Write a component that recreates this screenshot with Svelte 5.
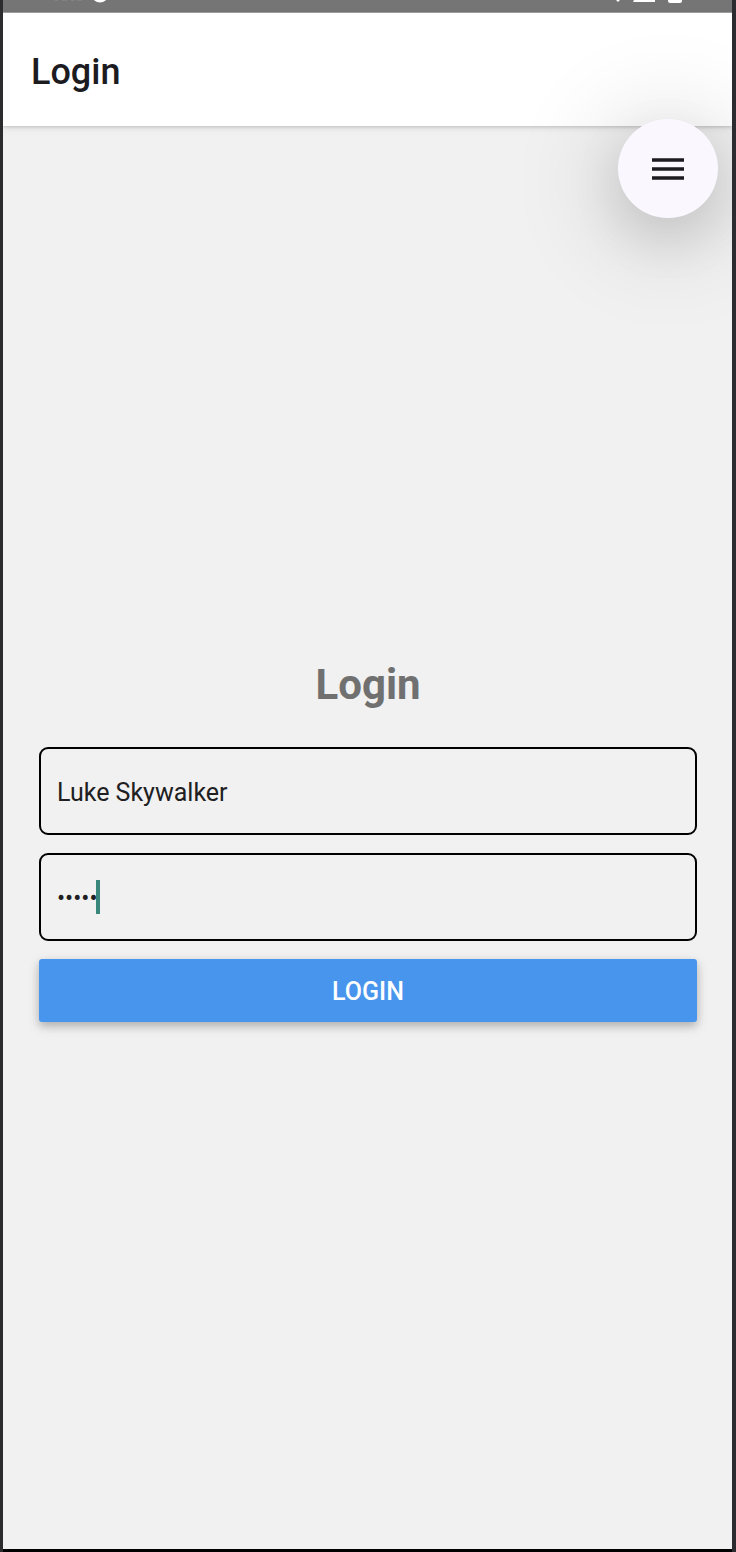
<script>
  let username = $state('Luke Skywalker');
  let password = $state('vader');
</script>

<div class="device">
  <div class="status" aria-hidden="true">
    <svg width="120" height="12" viewBox="0 0 120 12">
      <path d="M49 0h3M56 0h5M65 0h3M71 0h5" stroke="#909090" stroke-width="1" />
      <path d="M89 -1Q94 3 99 -1" fill="none" stroke="#fff" stroke-width="3" />
    </svg>
    <svg width="88" height="12" viewBox="0 0 88 12">
      <path d="M0 0h4L2 2Z" fill="#fff" />
      <path d="M18 0h21v2H17Z" fill="#fff" />
      <path d="M52 0h14v1q0 2-2 2H54q-2 0-2-2Z" fill="#fff" />
    </svg>
  </div>

  <header>
    <h1>Login</h1>
    <button class="menu" type="button" aria-label="Menu">
      <svg width="32" height="23" viewBox="0 0 32 23" aria-hidden="true">
        <path d="M0 3h32M0 12h32M0 21h32" stroke="#1c1b1f" stroke-width="3.600" />
      </svg>
    </button>
  </header>

  <main>
    <form onsubmit={(event) => event.preventDefault()}>
      <h2>Login</h2>
      <div class="field">
        <input type="text" aria-label="Username" bind:value={username} />
      </div>
      <div class="field">
        <input type="password" aria-label="Password" bind:value={password} />
        <span class="caret"></span>
      </div>
      <button class="submit" type="submit">LOGIN</button>
    </form>
  </main>
</div>

<style>
  :global(body) {
    margin: 0;
    background: #2b2b30;
  }

  .device {
    box-sizing: border-box;
    display: flex;
    flex-direction: column;
    min-height: 100vh;
    margin: 0 4px 0 3px;
    border-bottom: 3px solid #000;
    background: #f1f1f1;
    font-family: Roboto, sans-serif;
    overflow: hidden;
  }

  .status {
    display: flex;
    justify-content: space-between;
    height: 12px;
    padding: 0 28px 0 3px;
    border-bottom: 1px solid #a5a5a5;
    background: #757575;
  }

  .status svg {
    display: block;
  }

  header {
    position: relative;
    box-sizing: border-box;
    display: flex;
    align-items: center;
    height: 113px;
    padding: 4px 28px 0;
    background: #fff;
    box-shadow: 0 1px 3px rgb(0 0 0 / 16%), 0 2px 8px rgb(0 0 0 / 8%);
  }

  h1 {
    margin: 0;
    color: #1c1b1f;
    font-size: 36px;
    font-weight: 500;
    line-height: 48px;
  }

  .menu {
    position: absolute;
    top: 106px;
    right: 14px;
    display: grid;
    place-items: center;
    width: 100px;
    height: 99px;
    padding: 0;
    border: 0;
    border-radius: 50%;
    background: #faf7ff;
    box-shadow: 0 20px 52px rgb(0 0 0 / 11%), 0 12px 100px 16px rgb(0 0 0 / 14%);
  }

  main {
    display: flex;
    flex: 1;
    flex-direction: column;
    justify-content: center;
    padding: 0 35px 0 36px;
  }

  form {
    display: flex;
    flex-direction: column;
    gap: 18px;
  }

  h2 {
    margin: 0 0 12px;
    color: #707070;
    font-size: 42px;
    font-weight: 700;
    line-height: 64px;
    text-align: center;
  }

  .field {
    position: relative;
    display: flex;
  }

  input {
    box-sizing: border-box;
    flex: 1;
    min-width: 0;
    height: 88px;
    padding: 2px 16px 0;
    border: 2px solid #000;
    border-radius: 9px;
    outline: 0;
    background: transparent;
    color: #202022;
    font: 400 25px/32px Roboto, sans-serif;
  }

  input[type='password'] {
    font-size: 24px;
  }

  .caret {
    position: absolute;
    top: 27px;
    left: 57px;
    width: 4px;
    height: 34px;
    background: #38877a;
  }

  .submit {
    height: 63px;
    padding: 2px 0 0;
    border: 0;
    border-radius: 3px;
    background: #4895ed;
    box-shadow: 0 4px 8px rgb(0 0 0 / 20%), 0 4px 14px rgb(0 0 0 / 10%);
    color: #fff;
    font: 500 25px/32px Roboto, sans-serif;
  }
</style>
